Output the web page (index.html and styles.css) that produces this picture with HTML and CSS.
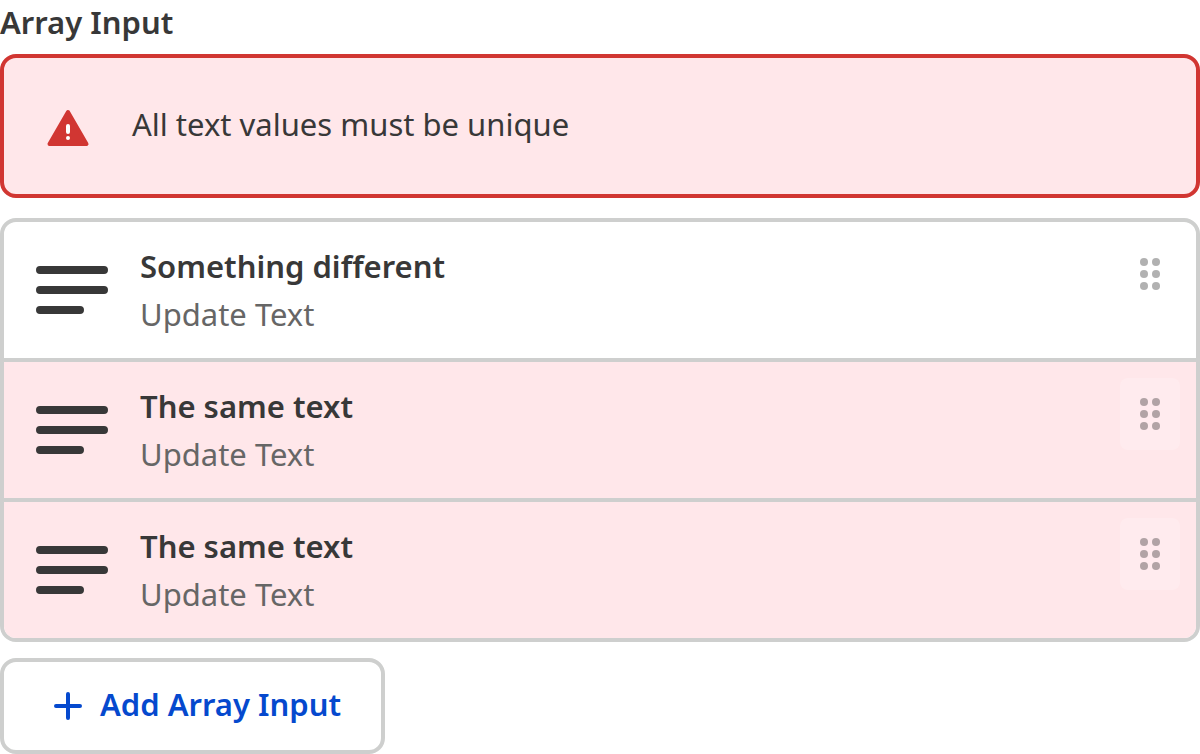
FILE: index.html
```html
<!DOCTYPE html>
<html lang="en">
<head>
  <meta charset="UTF-8" />
  <meta name="viewport" content="width=device-width, initial-scale=1.0" />
  <title>Array Input</title>
  <link rel="stylesheet" href="styles.css">
</head>
<body>
  <section class="field" aria-labelledby="field-label">
    <h2 class="label" id="field-label">Array Input</h2>

    <div class="alert" role="alert">
      <svg class="alert-icon" viewBox="0 0 48 48" aria-hidden="true">
        <path class="triangle" d="M24 10 L42.500 42 H5.500 Z" />
        <path class="mark" d="M24 24v6" />
        <circle cx="24" cy="36" r="2" />
      </svg>
      <p>All text values must be unique</p>
    </div>

    <ul class="list">
      <li class="item">
        <button type="button" class="item-main">
          <svg class="lines" viewBox="0 0 72 48" aria-hidden="true">
            <path d="M4 4h64M4 24h64M4 44h40" />
          </svg>
          <span class="text">
            <span class="title">Something different</span>
            <span class="subtitle">Update Text</span>
          </span>
        </button>
        <button type="button" class="handle" aria-label="Reorder">
          <svg viewBox="0 0 20 32" aria-hidden="true">
            <circle cx="4" cy="4" r="4" /><circle cx="16" cy="4" r="4" />
            <circle cx="4" cy="16" r="4" /><circle cx="16" cy="16" r="4" />
            <circle cx="4" cy="28" r="4" /><circle cx="16" cy="28" r="4" />
          </svg>
        </button>
      </li>
      <li class="item item-error">
        <button type="button" class="item-main">
          <svg class="lines" viewBox="0 0 72 48" aria-hidden="true">
            <path d="M4 4h64M4 24h64M4 44h40" />
          </svg>
          <span class="text">
            <span class="title">The same text</span>
            <span class="subtitle">Update Text</span>
          </span>
        </button>
        <button type="button" class="handle" aria-label="Reorder">
          <svg viewBox="0 0 20 32" aria-hidden="true">
            <circle cx="4" cy="4" r="4" /><circle cx="16" cy="4" r="4" />
            <circle cx="4" cy="16" r="4" /><circle cx="16" cy="16" r="4" />
            <circle cx="4" cy="28" r="4" /><circle cx="16" cy="28" r="4" />
          </svg>
        </button>
      </li>
      <li class="item item-error">
        <button type="button" class="item-main">
          <svg class="lines" viewBox="0 0 72 48" aria-hidden="true">
            <path d="M4 4h64M4 24h64M4 44h40" />
          </svg>
          <span class="text">
            <span class="title">The same text</span>
            <span class="subtitle">Update Text</span>
          </span>
        </button>
        <button type="button" class="handle" aria-label="Reorder">
          <svg viewBox="0 0 20 32" aria-hidden="true">
            <circle cx="4" cy="4" r="4" /><circle cx="16" cy="4" r="4" />
            <circle cx="4" cy="16" r="4" /><circle cx="16" cy="16" r="4" />
            <circle cx="4" cy="28" r="4" /><circle cx="16" cy="28" r="4" />
          </svg>
        </button>
      </li>
    </ul>

    <button type="button" class="btn-add">
      <svg class="plus" viewBox="0 0 48 48" aria-hidden="true">
        <path d="M24 12v24M12 24h24" />
      </svg>
      Add Array Input
    </button>
  </section>
</body>
</html>
```
FILE: styles.css
```css
* {
  box-sizing: border-box;
}
body {
  margin: 0;
  background-color: #ffffff;
  color: #383838;
  font-family: 'Noto Sans', sans-serif;
  font-size: 31px;
  line-height: 44px;
}
button {
  border: none;
  background: none;
  color: inherit;
  font: inherit;
  cursor: pointer;
}
svg {
  display: block;
  flex-shrink: 0;
}
.label {
  margin: 0 0 10px;
  font-size: 31px;
  font-weight: 600;
}
.alert {
  display: flex;
  align-items: flex-start;
  gap: 40px;
  padding: 44px 40px;
  border: 4px solid #d13632;
  border-radius: 16px;
  background-color: #ffe7ea;
}
.alert p {
  margin: 0;
}
.alert-icon {
  width: 48px;
  height: 48px;
  fill: #ffffff;
}
.alert-icon .triangle {
  fill: #d13632;
  stroke: #d13632;
  stroke-width: 4;
  stroke-linejoin: round;
}
.alert-icon .mark {
  stroke: #ffffff;
  stroke-width: 4;
  stroke-linecap: round;
}
.list {
  margin: 20px 0 16px;
  padding: 0;
  list-style: none;
  border: 4px solid #cecfce;
  border-radius: 16px;
  overflow: hidden;
}
.item {
  display: flex;
  align-items: flex-start;
}
.item + .item {
  border-top: 4px solid #cecfce;
}
.item-error {
  background-color: #ffe7ea;
}
.item-main {
  display: flex;
  flex: 1;
  align-items: center;
  gap: 32px;
  padding: 20px 32px;
  line-height: 48px;
  text-align: left;
}
.lines {
  width: 72px;
  height: 48px;
  fill: none;
  stroke: #383838;
  stroke-width: 8;
  stroke-linecap: round;
}
.text {
  display: flex;
  flex-direction: column;
}
.title {
  font-weight: 600;
}
.subtitle {
  color: #666666;
}
.handle {
  display: flex;
  align-items: center;
  justify-content: center;
  width: 60px;
  height: 72px;
  margin: 16px 16px 0 0;
  padding: 0;
  border-radius: 8px;
  background-color: rgba(255, 255, 255, 0.2);
}
.handle svg {
  width: 20px;
  height: 32px;
  fill: #000000;
  opacity: 0.3;
}
.btn-add {
  display: inline-flex;
  align-items: flex-start;
  gap: 8px;
  padding: 20px 40px;
  border: 4px solid #cecfce;
  border-radius: 16px;
  background-color: #ffffff;
  color: #0549ce;
  font-weight: 600;
}
.plus {
  width: 48px;
  height: 48px;
  fill: none;
  stroke: #0549ce;
  stroke-width: 4;
  stroke-linecap: round;
}
```
